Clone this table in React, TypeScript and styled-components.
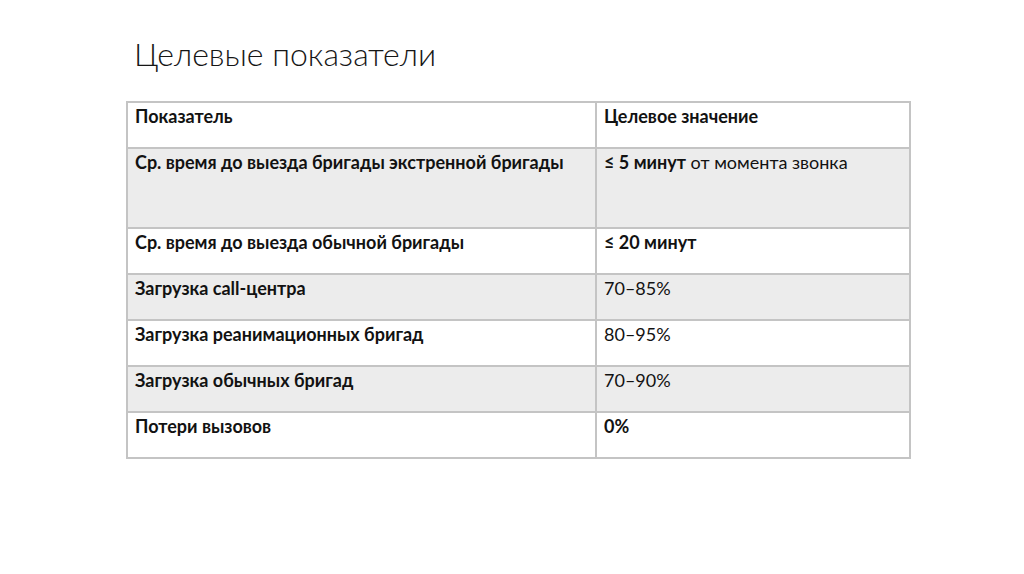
import React from "react";
import styled, { createGlobalStyle } from "styled-components";

const Global = createGlobalStyle`
  html, body { margin: 0; padding: 0; background: #ffffff; }
  body { font-family: Lato, "Noto Sans", sans-serif; color: #121212; }
`;

const Slide = styled.div`
  width: 1024px;
  height: 574px;
  box-sizing: border-box;
  padding: 33px 0 0 126px;
  display: flex;
  flex-direction: column;
  overflow: hidden;
`;

const Title = styled.h1`
  margin: 0 0 0 8px;
  font-family: Lato, "Noto Sans", sans-serif;
  font-weight: 300;
  font-size: 32px;
  line-height: 42px;
  color: #161616;
  height: 68px;
`;

const Table = styled.table`
  border-collapse: collapse;
  width: 785px;
  table-layout: fixed;
  border: 2px solid #c4c4c4;
`;

const Row = styled.tr<{ $shaded?: boolean; $tall?: boolean }>`
  background: ${(p) => (p.$shaded ? "#ececec" : "#ffffff")};
  height: ${(p) => (p.$tall ? "80px" : "46px")};
`;

const Cell = styled.td<{ $bold?: boolean }>`
  border: 2px solid #c4c4c4;
  padding: 2px 7px 0 7px;
  vertical-align: top;
  font-size: 18px;
  line-height: 22px;
  font-weight: ${(p) => (p.$bold ? 700 : 400)};
  box-sizing: border-box;
  white-space: nowrap;
`;

const B = styled.b`
  font-weight: 700;
`;

type R = { label: string; value: React.ReactNode; valueBold?: boolean };

const rows: R[] = [
  { label: "Ср. время до выезда бригады экстренной бригады", value: <><B>≤ 5 минут</B> от момента звонка</> },
  { label: "Ср. время до выезда обычной бригады", value: "≤ 20 минут", valueBold: true },
  { label: "Загрузка call-центра", value: "70–85%" },
  { label: "Загрузка реанимационных бригад", value: "80–95%" },
  { label: "Загрузка обычных бригад", value: "70–90%" },
  { label: "Потери вызовов", value: "0%", valueBold: true },
];

export default function App() {
  return (
    <>
      <Global />
      <Slide>
        <Title>Целевые показатели</Title>
        <Table>
          <colgroup>
            <col style={{ width: 469 }} />
            <col />
          </colgroup>
          <tbody>
            <Row>
              <Cell $bold>Показатель</Cell>
              <Cell $bold>Целевое значение</Cell>
            </Row>
            {rows.map((r, i) => (
              <Row key={i} $shaded={i % 2 === 0} $tall={i === 0}>
                <Cell $bold>{r.label}</Cell>
                <Cell $bold={r.valueBold}>{r.value}</Cell>
              </Row>
            ))}
          </tbody>
        </Table>
      </Slide>
    </>
  );
}
